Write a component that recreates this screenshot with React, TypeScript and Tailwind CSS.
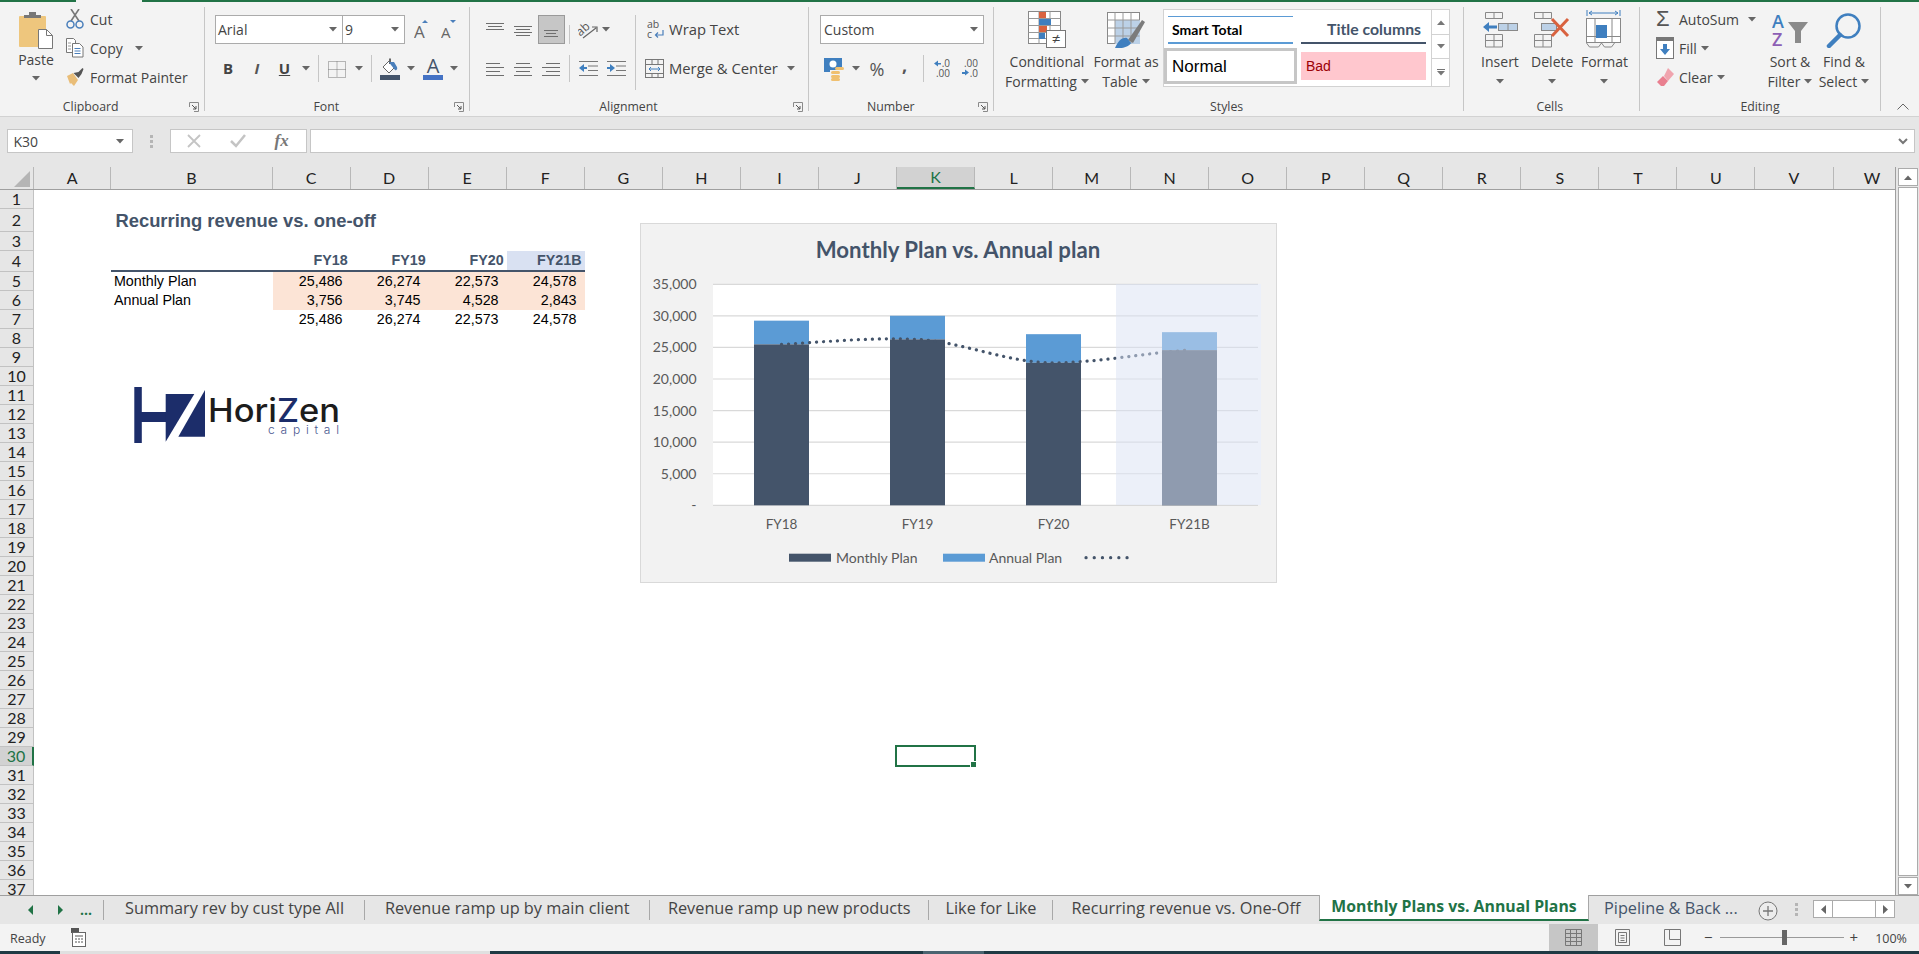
import type { ReactNode } from "react";

const GREEN = "#217346";
const SLATE = "#44546a";

function Caret({ color = "#666" }: { color?: string }) {
  return (
    <svg width="8" height="5" viewBox="0 0 8 5" className="shrink-0">
      <path d="M0 0h8L4 4.5z" fill={color} />
    </svg>
  );
}

function Launcher() {
  return (
    <svg width="10" height="10" viewBox="0 0 10 10" className="absolute right-[5px] top-[3px]">
      <path d="M.5 5V.5H9.5V9.5H5" fill="none" stroke="#8a8a8a" />
      <path d="M3 3l4 4M7 4v3H4" fill="none" stroke="#555" />
    </svg>
  );
}

function Group({ w, shift, label, launcher, children }: { w: string; shift: string; label: string; launcher?: boolean; children: ReactNode }) {
  return (
    <div className={`relative flex h-[104px] shrink-0 flex-col border-r border-[#c6c6c6] ${w}`}>
      <div className="flex h-[92px] shrink-0">{children}</div>
      <div className={`relative flex h-[12px] justify-center text-[12.300px] leading-[16px] ${shift}`}>
        {label}
        {launcher && <Launcher />}
      </div>
    </div>
  );
}

function BigButton({ w, icon, line1, line2 }: { w: string; icon: ReactNode; line1: string; line2?: string }) {
  return (
    <div className={`flex shrink-0 flex-col items-center whitespace-nowrap ${w}`}>
      <div className="flex h-[41px] items-end">{icon}</div>
      <div className="mt-[3px] flex h-[20px] items-center">{line1}</div>
      {line2 ? (
        <div className="flex h-[20px] items-center gap-[4px]">
          {line2}
          <Caret />
        </div>
      ) : (
        <div className="mt-[1px] flex h-[18px] items-center">
          <Caret />
        </div>
      )}
    </div>
  );
}

function SmallRow({ icon, label, caret, iconW }: { icon: ReactNode; label: string; caret?: ReactNode; iconW: string }) {
  return (
    <div className="flex h-[24px] items-center whitespace-nowrap">
      <div className={`flex shrink-0 items-center ${iconW}`}>{icon}</div>
      {label}
      {caret}
    </div>
  );
}

function Lines({ rows }: { rows: number[][] }) {
  return (
    <svg width="20" height="20" viewBox="0 0 20 20">
      {rows.map(([x1, x2, y], i) => (
        <path key={i} d={`M${x1} ${y}.5H${x2}`} stroke="#6e6e6e" />
      ))}
    </svg>
  );
}

const PasteIcon = (
  <svg width="36" height="37" viewBox="0 0 36 37">
    <rect x="1" y="4" width="27" height="31" rx="1" fill="#eec67d" />
    <path d="M6 6V3h5V0h7v3h5v3z" fill="#777" />
    <path d="M20.5 17.5h8l6 6v13h-14z" fill="#fff" stroke="#777" />
    <path d="M28.5 17.5v6h6" fill="none" stroke="#777" />
  </svg>
);
const CutIcon = (
  <svg width="18" height="20" viewBox="0 0 18 20" fill="none">
    <path d="M5 12L13 0M13 12L5 0" stroke="#777" strokeWidth="1.6" />
    <circle cx="4.5" cy="15.5" r="3.5" stroke="#4a7fbb" strokeWidth="1.5" />
    <circle cx="13.5" cy="15.5" r="3.5" stroke="#4a7fbb" strokeWidth="1.5" />
  </svg>
);
const CopyIcon = (
  <svg width="18" height="20" viewBox="0 0 18 20" fill="none">
    <path d="M.5.5h7l2 2v12H.5z" fill="#fff" stroke="#777" />
    <path d="M6.5 5.5h7l3.5 3.5v10H6.5z" fill="#fff" stroke="#777" />
    <path d="M2 5h3M2 8h3M2 11h3" stroke="#999" />
    <path d="M8.5 10.5h6M8.5 13h6M8.5 15.500h6" stroke="#4a7fbb" />
  </svg>
);
const PainterIcon = (
  <svg width="18" height="18" viewBox="0 0 18 18">
    <path d="M1 8l6-3 5 7-4 6-3-3-1 1z" fill="#e9bd78" />
    <path d="M7.500 5l5-1 4-4 1 1-2 5-3 4z" fill="#555" />
  </svg>
);
const FontGrow = (
  <svg width="16" height="22" viewBox="0 0 16 22">
    <text x="0" y="19" fontFamily="'Open Sans',sans-serif" fontSize="17" fill="#666">A</text>
    <path d="M8 4l3-3 3 3z" fill="#4a7fbb" />
  </svg>
);
const FontShrink = (
  <svg width="16" height="22" viewBox="0 0 16 22">
    <text x="0" y="19" fontFamily="'Open Sans',sans-serif" fontSize="15" fill="#666">A</text>
    <path d="M9 1h6l-3 3z" fill="#4a7fbb" />
  </svg>
);
const BordersIcon = (
  <svg width="18" height="20" viewBox="0 0 18 20" fill="none" stroke="#777" strokeDasharray="1 1">
    <path d="M.5 2.500h17v16H.5zM9 2.500v16M.5 10.500h17" />
  </svg>
);
const FillIcon = (
  <svg width="20" height="22" viewBox="0 0 20 22">
    <path d="M3 9l6-6 6 6-6 6z" fill="#fff" stroke="#666" />
    <path d="M9 2V.5h2V6H9z" fill="#666" />
    <path d="M9 4h5l3 5c1 2-1 4-2 3l-4-5z" fill="#4a7fbb" />
    <rect y="17" width="20" height="5" fill={SLATE} />
  </svg>
);
const FontColorIcon = (
  <svg width="20" height="22" viewBox="0 0 20 22">
    <text x="10" y="15" textAnchor="middle" fontFamily="'Open Sans',sans-serif" fontSize="20" fill={SLATE}>A</text>
    <rect y="17" width="20" height="5" fill="#4472c4" />
  </svg>
);
const OrientIcon = (
  <svg width="20" height="20" viewBox="0 0 20 20">
    <text x="0" y="13" transform="rotate(-42 6 12)" fontFamily="'Open Sans',sans-serif" fontSize="12" fill="#555">ab</text>
    <path d="M5 18L18 8M14 7h5v5" fill="none" stroke="#666" strokeWidth="1.2" />
  </svg>
);
function IndentIcon({ flip }: { flip?: boolean }) {
  return (
    <svg width="19" height="18" viewBox="0 0 19 18">
      <path d="M0 1.500h19M9 6h10M9 10.500h10M0 15.500h19" stroke="#777" />
      {flip ? (
        <path d="M0 7h3V4l5 4-5 4V9H0z" fill="#3f7fbf" />
      ) : (
        <path d="M8 7H5V4L0 8l5 4V9h3z" fill="#3f7fbf" />
      )}
    </svg>
  );
}
const WrapIcon = (
  <svg width="18" height="20" viewBox="0 0 18 20">
    <text x="0" y="8" fontFamily="'Open Sans',sans-serif" fontSize="10.500" fill="#555">ab</text>
    <text x="0" y="18" fontFamily="'Open Sans',sans-serif" fontSize="10.500" fill="#555">c</text>
    <path d="M16 10v5H9M11 12.500L8.500 15l2.500 2.500" fill="none" stroke="#4a7fbb" strokeWidth="1.2" />
  </svg>
);
const MergeIcon = (
  <svg width="20" height="20" viewBox="0 0 20 20" fill="none">
    <rect x=".5" y=".5" width="18" height="18" stroke="#777" />
    <path d="M.5 5.500h18M.5 14.500h18M7 .5v5M13 .5v5M7 14.500v4M13 14.500v4" stroke="#777" />
    <path d="M4 10h11M6 8l-2 2 2 2M13 8l2 2-2 2" stroke="#3f7fbf" />
  </svg>
);
const MoneyIcon = (
  <svg width="21" height="24" viewBox="0 0 21 24">
    <rect x="0" y="1" width="18" height="12" fill="#3f7fbf" />
    <circle cx="9" cy="7" r="3.500" fill="#fff" />
    <rect x="0" y="13" width="6" height="2" fill="#3f7fbf" />
    <rect x="11" y="10" width="9" height="3" rx="1.500" fill="#f0c070" />
    <rect x="7" y="14" width="9" height="3" rx="1.500" fill="#f0c070" />
    <rect x="7" y="18" width="9" height="3" rx="1.500" fill="#f0c070" />
    <rect x="7" y="21" width="9" height="3" rx="1.500" fill="#f0c070" />
  </svg>
);
function DecimalIcon({ more }: { more?: boolean }) {
  const t = { fontFamily: "'Open Sans',sans-serif", fontSize: 10, fill: "#555" };
  return (
    <svg width="16" height="20" viewBox="0 0 16 20">
      {more ? (
        <>
          <text x="16" y="8" textAnchor="end" {...t}>.0</text>
          <text x="16" y="18" textAnchor="end" {...t}>.00</text>
          <path d="M7 4H4V1.500L0 4.500l4 3V5.500h3z" fill="#3f7fbf" />
        </>
      ) : (
        <>
          <text x="16" y="8" textAnchor="end" {...t}>.00</text>
          <text x="16" y="18" textAnchor="end" {...t}>.0</text>
          <path d="M0 13h3v-2.500l4 3-4 3V15H0z" fill="#3f7fbf" />
        </>
      )}
    </svg>
  );
}
const CondIcon = (
  <svg width="38" height="37" viewBox="0 0 38 37">
    <rect x=".5" y=".5" width="32" height="32" fill="#fff" stroke="#888" />
    <path d="M.5 7.500h32M.5 14.500h32M.5 21.500h32M.5 27.500h32M11 .5v32M22 .5v32" stroke="#999" fill="none" />
    <rect x="11" y="1" width="7" height="6" fill="#d9623f" />
    <rect x="11" y="8" width="12" height="6" fill="#3f7fbf" />
    <rect x="11" y="15" width="8" height="6" fill="#d9623f" />
    <rect x="11" y="22" width="6" height="6" fill="#3f7fbf" />
    <rect x="18.500" y="19.500" width="19" height="17" fill="#fff" stroke="#777" />
    <text x="28" y="33" textAnchor="middle" fontFamily="'Open Sans',sans-serif" fontSize="15" fill="#444">≠</text>
  </svg>
);
const TableIcon = (
  <svg width="38" height="36" viewBox="0 0 38 36">
    <rect x=".5" y=".5" width="32" height="31" fill="#fff" stroke="#888" />
    <rect x="8" y="8" width="25" height="24" fill="#bcd1e7" />
    <path d="M.5 8h32M.5 16h32M.5 24h32M8 .5v31M16 .5v31M24 .5v31" stroke="#999" fill="none" />
    <path d="M21 28l14-20 3 2-12 21z" fill="#7b7b7b" />
    <path d="M8 36c3-7 7-11 12-10l4 5c-2 4-10 6-16 5z" fill="#3f7fbf" />
  </svg>
);
const InsertIcon = (
  <svg width="36" height="36" viewBox="0 0 36 36" fill="none" stroke="#888">
    <path d="M3.500.5h17v6h-17zM12 .5v6M3.500 22.500h17v12.500h-17zM12 22.500V35M3.500 28.500h17" />
    <rect x="16.500" y="11.500" width="19" height="7" fill="#bcd1e7" />
    <path d="M26 11.500v7" />
    <path d="M15 13.500H7V10l-6 5 6 5v-3.500h8z" fill="#3f7fbf" stroke="none" />
  </svg>
);
const DeleteIcon = (
  <svg width="36" height="36" viewBox="0 0 36 36" fill="none" stroke="#888">
    <path d="M.5.5h17v6H.5zM9 .5v6M.5 22.500h17V35H.5zM9 22.500V35M.5 28.500h17" />
    <rect x="7.500" y="11.500" width="15" height="7" fill="#bcd1e7" />
    <path d="M18 7l16 17M34 7L18 24" stroke="#d9623f" strokeWidth="3" />
  </svg>
);
const FormatIcon = (
  <svg width="36" height="38" viewBox="0 0 36 38" fill="none" stroke="#888">
    <path d="M1 0v6M34 0v6" stroke="#3f7fbf" />
    <path d="M3 3h29M6 1L3 3l3 2M29 1l3 2-3 2" stroke="#3f7fbf" />
    <rect x=".5" y="8.500" width="34" height="24" fill="#fff" />
    <path d="M9 8.500V33M26 8.500V33M.5 26.500h34" />
    <rect x="10" y="15" width="11" height="13" fill="#3f7fbf" stroke="none" />
    <path d="M.5 33l3 4h9l3-4M15.500 33l3 4h7l3-4" />
  </svg>
);
const FillDownIcon = (
  <svg width="18" height="22" viewBox="0 0 18 22">
    <rect x=".5" y=".5" width="17" height="21" fill="#fff" stroke="#777" />
    <rect x="1" y="1" width="16" height="3" fill="#777" />
    <path d="M7 7h4v5h3l-5 6-5-6h3z" fill="#3f7fbf" />
  </svg>
);
const EraserIcon = (
  <svg width="18" height="18" viewBox="0 0 18 18">
    <path d="M12 0l6 6-6 7-4-5z" fill="#f0a4ae" />
    <path d="M7 8l5 5-4 5H5l-4-4z" fill="#e97f8f" />
  </svg>
);
const SortIcon = (
  <svg width="36" height="34" viewBox="0 0 36 34">
    <text x="0" y="14" fontFamily="'Open Sans',sans-serif" fontWeight="600" fontSize="18" fill="#3f7fbf">A</text>
    <text x="0" y="32" fontFamily="'Open Sans',sans-serif" fontWeight="600" fontSize="18" fill="#8d5fb5">Z</text>
    <path d="M16 8h20l-7 9v12h-6V17z" fill="#8a8a8a" />
  </svg>
);
const FindIcon = (
  <svg width="36" height="36" viewBox="0 0 36 36" fill="none">
    <circle cx="22" cy="14" r="11.500" stroke="#3f7fbf" strokeWidth="2.500" />
    <path d="M14 23L3 34" stroke="#3f7fbf" strokeWidth="4.500" strokeLinecap="round" />
  </svg>
);

const colLetters = "ABCDEFGHIJKLMNOPQRSTUVW".split("");
const rowNumbers = Array.from({ length: 37 }, (_, i) => i + 1);
const rowHeight: Record<number, string> = { 2: "h-[23px]", 4: "h-[21px]" };

const years = ["FY18", "FY19", "FY20", "FY21B"];
const monthly = ["25,486", "26,274", "22,573", "24,578"];
const annual = ["3,756", "3,745", "4,528", "2,843"];
const colStart = ["col-start-3", "col-start-4", "col-start-5", "col-start-6"];

const chartData = [
  { x: 754, label: "FY18", m: 25486, a: 3756 },
  { x: 890, label: "FY19", m: 26274, a: 3745 },
  { x: 1026, label: "FY20", m: 22573, a: 4528 },
  { x: 1162, label: "FY21B", m: 24578, a: 2843 },
];
const Y0 = 504.3;
const yOf = (v: number) => Y0 - (v / 35000) * 221;

function Chart() {
  const f = { fontFamily: "Lato, sans-serif", fill: "#595959" };
  return (
    <div className="absolute left-[606px] top-[33px] h-[360px] w-[637px] border border-[#d9d9d9] bg-[#f2f2f2]">
      <svg width="635" height="358" viewBox="641 223 635 358" className="block">
        <text x="958" y="257" textAnchor="middle" fontFamily="Lato, sans-serif" fontWeight="700" fontSize="22.200" fill={SLATE}>
          Monthly Plan vs. Annual plan
        </text>
        <rect x="713" y="283" width="548" height="221" fill="#fff" />
        {[0, 5000, 10000, 15000, 20000, 25000, 30000, 35000].map((v) => (
          <g key={v}>
            <path d={`M713 ${yOf(v)}H1258`} stroke="#d9d9d9" strokeWidth="1.200" />
            <text x="696.500" y={yOf(v) + 5} textAnchor="end" fontSize="14" {...f}>
              {v === 0 ? "-" : v.toLocaleString("en-US")}
            </text>
          </g>
        ))}
        {chartData.map((d) => (
          <g key={d.label}>
            <rect x={d.x} y={yOf(d.m + d.a)} width="55" height={(d.a / 35000) * 221} fill="#5b9bd5" />
            <rect x={d.x} y={yOf(d.m)} width="55" height={(d.m / 35000) * 221} fill={SLATE} />
            <text x={d.x + 27.5} y="528" textAnchor="middle" fontSize="13.500" {...f}>
              {d.label}
            </text>
          </g>
        ))}
        <path
          d="M781.500 343.400C827 341 872 336 917.500 338.400C963 341 1008 362 1053.500 361.800C1099 361.600 1144 352 1189.500 349.100"
          fill="none"
          stroke={SLATE}
          strokeWidth="3.200"
          strokeLinecap="round"
          strokeDasharray="0.1 6.900"
        />
        <rect x="1116" y="283" width="145" height="221" fill="#d9e2f3" opacity="0.5" />
        <rect x="789" y="552.700" width="42" height="8" fill={SLATE} />
        <text x="836" y="561.500" fontSize="14" {...f}>Monthly Plan</text>
        <rect x="943" y="552.700" width="42" height="8" fill="#5b9bd5" />
        <text x="989" y="561.500" fontSize="14" {...f}>Annual Plan</text>
        <path d="M1086 556.700H1128" stroke={SLATE} strokeWidth="3.200" strokeLinecap="round" strokeDasharray="0.1 8.100" />
      </svg>
    </div>
  );
}

function Logo() {
  return (
    <svg width="210" height="60" viewBox="134 386 210 60" className="absolute left-[100px] top-[196px]">
      <rect x="134.300" y="387" width="7.500" height="56" fill="#1c2d6a" />
      <rect x="141" y="412" width="29" height="10" fill="#1c2d6a" />
      <path d="M165.700 394H194.300L165.700 441.700z" fill="#1c2d6a" />
      <path d="M205 390V436.700H178.300z" fill="#1c2d6a" />
      <text x="208" y="421.700" fontFamily="Inter, sans-serif" fontWeight="500" fontSize="32" textLength="132" lengthAdjust="spacingAndGlyphs" fill="#1c1c1c">
        Hori<tspan fill="#1c2d6a">Z</tspan>en
      </text>
      <text x="268" y="434" fontFamily="Inter, sans-serif" fontWeight="300" fontSize="12" textLength="71" fill="#4a5790">
        capital
      </text>
    </svg>
  );
}

const tabs = [
  { name: "Summary rev by cust type All", w: "w-[261px]" },
  { name: "Revenue ramp up by main client", w: "w-[284.500px]" },
  { name: "Revenue ramp up new products", w: "w-[279.500px]" },
  { name: "Like for Like", w: "w-[124px]" },
  { name: "Recurring revenue vs. One-Off", w: "w-[266px]" },
];

export default function App() {
  return (
    <div className="flex h-[954px] w-[1919px] flex-col overflow-hidden bg-[#e6e6e6] font-['Open_Sans',sans-serif] text-[14px] text-[#444]">
      {/* ribbon */}
      <div className="flex h-[2px] shrink-0 bg-[#217346]">
        <div className="ml-[76px] w-[66px] bg-[#f3f3f3]" />
      </div>
      <div className="flex h-[115px] shrink-0 border-b border-[#d2d2d2] bg-[#f3f3f3] pt-[5px]">
        <Group w="w-[204.500px]" shift="pr-[22px]" label="Clipboard" launcher>
          <div className="flex w-[66px] shrink-0 flex-col items-center pl-[6px]">
            <div className="mt-[5px]">{PasteIcon}</div>
            <div className="flex h-[20px] items-center">Paste</div>
            <div className="mt-[7px]"><Caret /></div>
          </div>
          <div className="flex flex-col gap-[5px]">
            <SmallRow iconW="w-[24px]" icon={CutIcon} label="Cut" />
            <SmallRow iconW="w-[24px]" icon={CopyIcon} label="Copy" caret={<span className="ml-[12px]"><Caret /></span>} />
            <SmallRow iconW="w-[24px]" icon={PainterIcon} label="Format Painter" />
          </div>
        </Group>

        <Group w="w-[265.500px]" shift="pr-[21px]" label="Font" launcher>
          <div className="flex flex-col pl-[10.500px] pt-[8px]">
            <div className="flex h-[29px] items-center">
              <div className="flex h-[29px] w-[128px] items-center justify-between border border-[#ababab] bg-white pl-[2px] pr-[5px]">
                Arial
                <Caret />
              </div>
              <div className="flex h-[29px] w-[62px] items-center justify-between border border-l-0 border-[#ababab] bg-white pl-[2px] pr-[5px]">
                9
                <Caret />
              </div>
              <div className="ml-[9px]">{FontGrow}</div>
              <div className="ml-[11px]">{FontShrink}</div>
            </div>
            <div className="mt-[11px] flex h-[27px] items-center">
              <div className="flex w-[26px] justify-center text-[15px] font-bold">B</div>
              <div className="flex w-[32px] justify-center text-[15px] font-bold italic text-[#555]">I</div>
              <div className="flex w-[23px] justify-center text-[15px] font-bold underline">U</div>
              <div className="flex w-[20px] justify-center"><Caret /></div>
              <div className="ml-[2px] h-[27px] w-px bg-[#c6c6c6]" />
              <div className="ml-[9px]">{BordersIcon}</div>
              <div className="flex w-[25px] justify-center"><Caret /></div>
              <div className="h-[27px] w-px bg-[#c6c6c6]" />
              <div className="ml-[8px]">{FillIcon}</div>
              <div className="flex w-[22px] justify-center"><Caret /></div>
              <div className="ml-[1px]">{FontColorIcon}</div>
              <div className="flex w-[22px] justify-center"><Caret /></div>
            </div>
          </div>
        </Group>

        <Group w="w-[339px]" shift="pr-[21px]" label="Alignment" launcher>
          <div className="mt-[8px] flex h-[75px] w-[166px] shrink-0 flex-col border-r border-[#c6c6c6] pl-[11px]">
            <div className="flex h-[29px] items-center">
              <div className="flex w-[28px] justify-center"><Lines rows={[[1, 19, 3], [3, 17, 6], [1, 19, 9]]} /></div>
              <div className="flex w-[28.500px] justify-center"><Lines rows={[[1, 19, 6], [3, 17, 9], [1, 19, 12], [3, 17, 15]]} /></div>
              <div className="flex h-[29px] w-[27.500px] items-center justify-center border border-[#9a9a9a] bg-[#c6c6c6]"><Lines rows={[[3, 17, 10], [5, 15, 13], [3, 17, 16]]} /></div>
              <div className="ml-[4px] mt-[9px] h-[19px] w-px bg-[#c6c6c6]" />
              <div className="ml-[8px]">{OrientIcon}</div>
              <div className="flex w-[16px] justify-center"><Caret /></div>
            </div>
            <div className="mt-[11px] flex h-[27px] items-center">
              <div className="flex w-[28px] justify-center"><Lines rows={[[1, 15, 4], [1, 19, 8], [1, 15, 12], [1, 19, 16]]} /></div>
              <div className="flex w-[28.500px] justify-center"><Lines rows={[[3, 17, 4], [1, 19, 8], [3, 17, 12], [1, 19, 16]]} /></div>
              <div className="flex w-[27.500px] justify-center"><Lines rows={[[5, 19, 4], [1, 19, 8], [5, 19, 12], [1, 19, 16]]} /></div>
              <div className="ml-[4px] h-[27px] w-px bg-[#c6c6c6]" />
              <div className="flex w-[36px] justify-center"><IndentIcon /></div>
              <div className="flex w-[20px] justify-center"><IndentIcon flip /></div>
            </div>
          </div>
          <div className="flex flex-col whitespace-nowrap pl-[9px] pt-[8px]">
            <div className="flex h-[29px] items-center">
              <div className="w-[24px] pl-[2px]">{WrapIcon}</div>
              <span className="text-[14.800px]">Wrap Text</span>
            </div>
            <div className="mt-[11px] flex h-[27px] items-center">
              <div className="w-[24px]">{MergeIcon}</div>
              <span className="w-[118px] text-[14.800px]">Merge &amp; Center</span>
              <Caret />
            </div>
          </div>
        </Group>

        <Group w="w-[184.500px]" shift="pr-[20px]" label="Number" launcher>
          <div className="flex flex-col pl-[11px] pt-[8px]">
            <div className="flex h-[29px] w-[164px] items-center justify-between border border-[#ababab] bg-white pl-[3px] pr-[5px]">
              Custom
              <Caret />
            </div>
            <div className="mt-[11px] flex h-[27px] items-center">
              <div className="ml-[4px]">{MoneyIcon}</div>
              <div className="flex w-[21px] justify-center"><Caret /></div>
              <div className="flex w-[22px] justify-center text-[18px] leading-none text-[#555]">%</div>
              <div className="mb-[8px] flex w-[33px] justify-center text-[18px] font-bold leading-none text-[#555]">,</div>
              <div className="ml-[2px] h-[27px] w-px bg-[#c6c6c6]" />
              <div className="flex w-[36px] justify-center"><DecimalIcon more /></div>
              <div className="flex w-[19px] justify-center"><DecimalIcon /></div>
            </div>
          </div>
        </Group>

        <Group w="w-[470.200px]" shift="pr-[3px]" label="Styles">
          <BigButton w="ml-[13.500px] w-[80px]" icon={CondIcon} line1="Conditional" line2="Formatting" />
          <BigButton w="w-[78px]" icon={TableIcon} line1="Format as" line2="Table" />
          <div className="-ml-[2px] mt-[2px] flex h-[78px] w-[287px] border border-[#d2d2d2] bg-white">
            <div className="grid w-[268px] grid-cols-[125px_125px] grid-rows-[28px_36px] gap-x-[8px] gap-y-[4px] pl-[4px] pt-[6px]">
              <div className="flex items-center border-y border-t-[#5b9bd5] border-b-[#5b9bd5] border-b-2 pl-[4px] font-['Lato',sans-serif] text-[14px] font-bold text-black">
                Smart Total
              </div>
              <div className="flex items-center justify-end border-b-2 border-[#44546a] pr-[5px] font-['Lato',sans-serif] text-[15.800px] font-bold text-[#44546a]">
                Title columns
              </div>
              <div className="-mx-[4px] flex items-center border-[3.500px] border-[#c6c6c6] pl-[5px] pt-[1px] font-['Liberation_Sans',sans-serif] text-[17px] text-black">
                Normal
              </div>
              <div className="my-[4px] flex items-center bg-[#ffc7ce] pl-[5px] font-['Liberation_Sans',sans-serif] text-[14px] text-[#9c0006]">
                Bad
              </div>
            </div>
            <div className="flex w-[18px] flex-col border-l border-[#d2d2d2]">
              <div className="flex h-[25px] items-center justify-center border-b border-[#d2d2d2]"><span className="rotate-180"><Caret color="#777" /></span></div>
              <div className="flex h-[24px] items-center justify-center border-b border-[#d2d2d2]"><Caret color="#777" /></div>
              <div className="flex flex-1 flex-col items-center justify-center gap-[1px]">
                <div className="h-px w-[8px] bg-[#777]" />
                <Caret color="#777" />
              </div>
            </div>
          </div>
        </Group>

        <Group w="w-[176.300px]" shift="pr-[3px]" label="Cells">
          <BigButton w="ml-[10.300px] w-[52px]" icon={InsertIcon} line1="Insert" />
          <BigButton w="w-[52.500px]" icon={DeleteIcon} line1="Delete" />
          <BigButton w="w-[52px]" icon={FormatIcon} line1="Format" />
        </Group>

        <Group w="w-[241px]" shift="" label="Editing">
          <div className="flex w-[123px] shrink-0 flex-col gap-[5px] pl-[16px]">
            <SmallRow iconW="w-[23px]" icon={<span className="font-['Liberation_Sans',sans-serif] text-[22px] leading-none text-[#555]">Σ</span>} label="AutoSum" caret={<span className="ml-[9px]"><Caret /></span>} />
            <SmallRow iconW="w-[23px]" icon={FillDownIcon} label="Fill" caret={<span className="ml-[4px]"><Caret /></span>} />
            <SmallRow iconW="w-[23px]" icon={EraserIcon} label="Clear" caret={<span className="ml-[4px]"><Caret /></span>} />
          </div>
          <BigButton w="w-[54px]" icon={SortIcon} line1="Sort &" line2="Filter" />
          <BigButton w="w-[54px]" icon={FindIcon} line1="Find &" line2="Select" />
        </Group>

        <div className="flex h-[104px] flex-1 items-end justify-center pb-[1px] pl-[6px]">
          <svg width="12" height="7" viewBox="0 0 12 7" fill="none"><path d="M.5 6.500L6 1l5.500 5.500" stroke="#666" /></svg>
        </div>
      </div>

      {/* formula bar */}
      <div className="flex h-[50px] shrink-0 pt-[12px]">
        <div className="ml-[6.500px] flex h-[24px] w-[126px] items-center justify-between border border-[#c6c6c6] bg-white pl-[6px] pr-[8px]">
          K30
          <Caret />
        </div>
        <div className="ml-[17px] flex h-[24px] flex-col justify-center gap-[2px]">
          <div className="h-[3px] w-[3px] bg-[#b5b5b5]" />
          <div className="h-[3px] w-[3px] bg-[#b5b5b5]" />
          <div className="h-[3px] w-[3px] bg-[#b5b5b5]" />
        </div>
        <div className="ml-[17px] flex h-[24px] w-[137px] items-center border border-[#c6c6c6] bg-white">
          <svg width="14" height="14" viewBox="0 0 14 14" className="ml-[16px]" fill="none"><path d="M1 1l12 12M13 1L1 13" stroke="#c4c4c4" strokeWidth="1.800" /></svg>
          <svg width="16" height="14" viewBox="0 0 16 14" className="ml-[29px]" fill="none"><path d="M1 7l5 5L15 1" stroke="#c4c4c4" strokeWidth="2.500" /></svg>
          <span className="ml-[29px] font-['Liberation_Serif',serif] text-[17px] font-bold italic text-[#777]">fx</span>
        </div>
        <div className="ml-[3px] flex h-[24px] w-[1605px] items-center justify-end border border-[#c6c6c6] bg-white pr-[6px]">
          <svg width="10" height="7" viewBox="0 0 10 7" fill="none"><path d="M1 1l4 4 4-4" stroke="#777" strokeWidth="2" /></svg>
        </div>
      </div>

      {/* sheet */}
      <div className="flex h-[728px] shrink-0">
        <div className="flex w-[1896px] shrink-0 flex-col border-r border-[#9f9f9f]">
          <div className="flex h-[23px] shrink-0 overflow-hidden border-b border-[#9f9f9f] font-['Lato',sans-serif] text-[16px] text-[#222]">
            <div className="flex w-[34px] shrink-0 items-end justify-end border-r border-[#b8b8b8] pb-[2px] pr-[3px]">
              <svg width="16" height="16" viewBox="0 0 16 16"><path d="M16 0V16H0z" fill="#b5b5b5" /></svg>
            </div>
            {colLetters.map((c, i) => (
              <div
                key={c}
                className={`flex shrink-0 items-center justify-center border-r border-[#b8b8b8] ${i === 0 ? "w-[77.400px]" : i === 1 ? "w-[161.200px]" : "w-[78.050px]"} ${c === "K" ? "border-b-2 border-b-[#217346] bg-[#d2d2d2] text-[#217346]" : ""}`}
              >
                {c}
              </div>
            ))}
          </div>
          <div className="flex min-h-0 flex-1">
            <div className="w-[34px] shrink-0 overflow-hidden font-['Lato',sans-serif] text-[16px] text-[#222]">
              {rowNumbers.map((n) => (
                <div
                  key={n}
                  className={`flex items-center justify-center border-b border-r border-[#c2c2c2] ${rowHeight[n] ?? "h-[19px]"} ${n === 30 ? "border-r-2 border-r-[#217346] bg-[#d2d2d2] text-[#217346]" : ""}`}
                >
                  {n}
                </div>
              ))}
            </div>
            <div className="relative min-w-0 flex-1 overflow-hidden bg-white font-['Liberation_Sans',sans-serif] text-[14.300px] text-black">
              <div className="grid w-max grid-cols-[77.400px_161.200px_repeat(4,78px)] grid-rows-[19px_23px_19px_21px_19px_19px_19px]">
                <div className="col-span-3 col-start-2 row-start-2 flex items-end whitespace-nowrap pl-[4px] text-[18.400px] font-bold leading-[22px] text-[#44546a]">
                  Recurring revenue vs. one-off
                </div>
                <div className="col-start-2 row-start-4 border-b-2 border-[#44546a]" />
                {years.map((y, i) => (
                  <div key={y} className={`row-start-4 flex items-center justify-end border-b-2 border-[#44546a] pr-[3px] font-bold text-[#44546a] ${i === 3 ? "bg-[#d9e1f2]" : ""} ${colStart[i]}`}>
                    {y}
                  </div>
                ))}
                <div className="col-start-2 row-start-5 flex items-center pl-[2.500px]">Monthly Plan</div>
                <div className="col-start-2 row-start-6 flex items-center pl-[2.500px]">Annual Plan</div>
                {monthly.map((v, i) => (
                  <div key={i} className={`row-start-5 flex items-center justify-end bg-[#fce4d6] pr-[8px] ${colStart[i]}`}>
                    {v}
                  </div>
                ))}
                {annual.map((v, i) => (
                  <div key={i} className={`row-start-6 flex items-center justify-end bg-[#fce4d6] pr-[8px] ${colStart[i]}`}>
                    {v}
                  </div>
                ))}
                {monthly.map((v, i) => (
                  <div key={i} className={`row-start-7 flex items-center justify-end pr-[8px] ${colStart[i]}`}>
                    {v}
                  </div>
                ))}
              </div>
              <Logo />
              <Chart />
              <div className="absolute left-[861px] top-[555px] h-[22px] w-[81px] border-2 border-[#217346]">
                <div className="absolute -bottom-[3px] -right-[3px] h-[7px] w-[7px] border border-white bg-[#217346]" />
              </div>
            </div>
          </div>
        </div>
        <div className="flex flex-1 flex-col pl-[2px] pt-[1px]">
          <div className="flex h-[18px] w-[20px] items-center justify-center border border-[#ababab] bg-white"><span className="rotate-180"><Caret color="#666" /></span></div>
          <div className="my-[1px] w-[20px] flex-1 border border-[#ababab] bg-white" />
          <div className="flex h-[18px] w-[20px] items-center justify-center border border-[#ababab] bg-white"><Caret color="#666" /></div>
        </div>
      </div>

      {/* tabs */}
      <div className="flex h-[29px] shrink-0 whitespace-nowrap border-t border-[#9f9f9f] text-[16.300px]">
        <div className="flex w-[103px] shrink-0 items-center">
          <svg width="6" height="10" viewBox="0 0 6 10" className="ml-[28px]"><path d="M5 0v10L0 5z" fill={GREEN} /></svg>
          <svg width="6" height="10" viewBox="0 0 6 10" className="ml-[23px]"><path d="M1 0v10l5-5z" fill={GREEN} /></svg>
          <span className="mb-[2px] ml-[17px] text-[14px] font-bold text-[#217346]">...</span>
        </div>
        <div className="my-[4px] w-px bg-[#a8a8a8]" />
        {tabs.map((t, i) => (
          <div key={t.name} className="flex">
            <div className={`flex items-center justify-center pb-[4px] ${t.w}`}>{t.name}</div>
            {i < 4 && <div className="my-[4px] -ml-px w-px bg-[#a8a8a8]" />}
          </div>
        ))}
        <div className="-mt-px flex h-[26px] w-[270px] shrink-0 items-center justify-center border-x border-b-2 border-x-[#a8a8a8] border-b-[#217346] bg-white text-[15.800px] font-bold text-[#217346]">
          Monthly Plans vs. Annual Plans
        </div>
        <div className="flex w-[165px] items-center pb-[4px] pl-[15px] text-[#44546a]">Pipeline &amp; Back ...</div>
        <svg width="20" height="20" viewBox="0 0 20 20" fill="none" className="ml-[4px] mt-[5px]" stroke="#777">
          <circle cx="10" cy="10" r="9" fill="#ececec" />
          <path d="M10 5v10M5 10h10" strokeWidth="1.300" />
        </svg>
        <div className="ml-[17px] mt-[7px] flex h-[13px] flex-col justify-between">
          <div className="h-[3px] w-[3px] bg-[#b5b5b5]" />
          <div className="h-[3px] w-[3px] bg-[#b5b5b5]" />
          <div className="h-[3px] w-[3px] bg-[#b5b5b5]" />
        </div>
        <div className="ml-[15px] mt-[4px] flex h-[18px] w-[82px] items-stretch border border-[#ababab] bg-white">
          <div className="flex w-[19px] items-center justify-center border-r border-[#ababab]"><svg width="5" height="9" viewBox="0 0 5 9"><path d="M5 0v9L0 4.500z" fill="#666" /></svg></div>
          <div className="flex-1" />
          <div className="flex w-[19px] items-center justify-center border-l border-[#ababab]"><svg width="5" height="9" viewBox="0 0 5 9"><path d="M0 0v9l5-4.500z" fill="#666" /></svg></div>
        </div>
      </div>

      {/* status bar */}
      <div className="flex h-[27px] shrink-0 items-center bg-[#f3f3f3] text-[12.500px]">
        <span className="ml-[10px] w-[61px] pt-[3px]">Ready</span>
        <svg width="16" height="19" viewBox="0 0 16 19">
          <path d="M0 0h8v5H0z" fill="#555" />
          <rect x="1.500" y="4.500" width="13" height="14" fill="#fff" stroke="#666" />
          <path d="M4 8h8M4 11h2M7 11h2M10 11h2M4 14h2M7 14h2M10 14h2" stroke="#555" />
        </svg>
        <div className="ml-[1462px] flex h-[27px] w-[49px] items-center justify-center bg-[#c6c6c6]">
          <svg width="17" height="17" viewBox="0 0 17 17" fill="none" stroke="#777"><path d="M.5.5h16v16H.5zM.5 4.500h16M.5 8.500h16M.5 12.500h16M5.500.5v16M11.500.5v16" /></svg>
        </div>
        <svg width="15" height="17" viewBox="0 0 15 17" fill="none" stroke="#777" className="ml-[17px]"><path d="M.5.5h14v16H.5zM3.500 3.500h8v10h-8zM5.500 6.500h4M5.500 9h4M5.500 11.500h4" /></svg>
        <svg width="17" height="17" viewBox="0 0 17 17" fill="none" stroke="#777" className="ml-[34px]"><path d="M.5.5h16v16H.5zM5.500.5v10h11" /></svg>
        <span className="ml-[23px] text-[15px]">−</span>
        <div className="relative ml-[7px] h-[1px] w-[124px] bg-[#9a9a9a]">
          <div className="absolute -top-[7px] left-[62px] h-[15px] w-[5px] bg-[#666]" />
        </div>
        <span className="ml-[6px] text-[15px]">+</span>
        <span className="ml-[17px] pt-[3px]">100%</span>
      </div>

      {/* taskbar edge */}
      <div className="flex h-[3px] shrink-0 bg-[#1f3a44]">
        <div className="ml-[60px] w-[430px] bg-[#e0e0e0]" />
        <div className="ml-[433px] w-[61px] bg-[#4a6470]" />
      </div>
    </div>
  );
}
